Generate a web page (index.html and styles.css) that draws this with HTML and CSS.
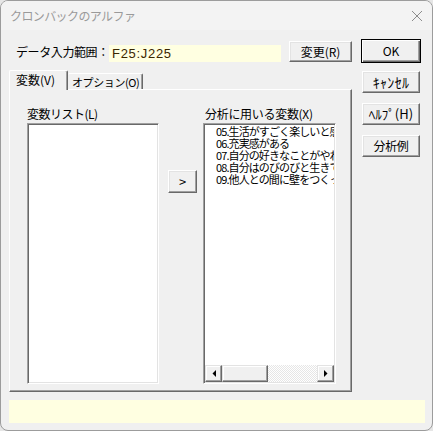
FILE: index.html
```html
<!DOCTYPE html>
<html lang="ja">
<head>
<meta charset="utf-8">
<title>クロンバックのアルファ</title>
<link rel="stylesheet" href="styles.css">
</head>
<body>
<div class="window">
  <div class="titlebar">
    <span class="title">クロンバックのアルファ</span>
    <svg class="close" width="12" height="12" viewBox="0 0 12 12"><path d="M1 1L11 11M11 1L1 11" stroke="#8c8c8c" stroke-width="1" fill="none"/></svg>
  </div>
  <div class="content">
    <div class="main">
      <div class="row1">
        <span class="data-label">データ入力範囲：</span>
        <div class="range-field">F25:J225</div>
        <button class="btn btn-change">変更(R)</button>
      </div>
      <div class="tabs">
        <div class="tab tab-active">変数(V)</div>
        <div class="tab tab-inactive">オプション(O)</div>
      </div>
      <div class="panel">
        <div class="col col-left">
          <div class="col-label">変数リスト(L)</div>
          <div class="listbox"></div>
        </div>
        <button class="btn btn-move">&gt;</button>
        <div class="col col-right">
          <div class="col-label col-label-right">分析に用いる変数(X)</div>
          <div class="listbox listbox-items">
            <ul class="items">
              <li>05.生活がすごく楽しいと感じる</li>
              <li>06.充実感がある</li>
              <li>07.自分の好きなことがやれている</li>
              <li>08.自分はのびのびと生きている</li>
              <li>09.他人との間に壁をつくっている</li>
            </ul>
            <div class="hscroll">
              <div class="sb-btn"><svg width="4" height="7" viewBox="0 0 4 7"><path d="M4 0V7L0.5 3.5Z" fill="#000"/></svg></div>
              <div class="sb-thumb"></div>
              <div class="sb-track"></div>
              <div class="sb-btn"><svg width="4" height="7" viewBox="0 0 4 7"><path d="M0 0V7L3.5 3.5Z" fill="#000"/></svg></div>
            </div>
          </div>
        </div>
      </div>
    </div>
    <div class="side">
      <button class="btn btn-default">OK</button>
      <button class="btn btn-side btn-kana btn-cancel">ｷｬﾝｾﾙ</button>
      <button class="btn btn-side btn-kana btn-help">ﾍﾙﾌﾟ(H)</button>
      <button class="btn btn-side">分析例</button>
    </div>
  </div>
  <div class="status"></div>
</div>
</body>
</html>
```

FILE: styles.css
```css
* { box-sizing: border-box; }
html, body { margin: 0; padding: 0; }
body {
  width: 433px;
  height: 431px;
  overflow: hidden;
  background: #e6e6e6;
  font-family: "Noto Sans CJK JP", "Noto Sans", sans-serif;
  color: #000;
}
.window {
  width: 433px;
  height: 431px;
  border: 1px solid #9c9c9c;
  border-radius: 8px;
  background: #f0f0f0;
  overflow: hidden;
  display: flex;
  flex-direction: column;
}
.titlebar {
  height: 29px;
  flex: none;
  display: flex;
  align-items: center;
  padding-left: 9px;
  background: #f3f3f3;
}
.title {
  font-size: 12px;
  line-height: 14px;
  color: #9a9a9a;
  letter-spacing: -0.6px;
}
.close {
  margin-left: auto;
  margin-right: 9px;
  margin-top: 1px;
}
.content {
  display: flex;
  padding: 9px 0 0 8px;
}
.main { width: 343px; flex: none; }
.side {
  width: 60px;
  margin-left: 9px;
  display: flex;
  flex-direction: column;
  align-items: center;
}
.row1 {
  height: 31px;
  display: flex;
  align-items: flex-start;
}
.data-label {
  width: 93px;
  margin-left: 7px;
  margin-top: 6px;
  font-size: 12px;
  line-height: 14px;
  letter-spacing: -0.4px;
  white-space: nowrap;
}
.range-field {
  width: 172px;
  height: 17px;
  margin-top: 6px;
  padding-left: 3px;
  background: #ffffe1;
  font-family: "Liberation Sans", sans-serif;
  font-size: 13px;
  line-height: 18px;
  letter-spacing: 0.7px;
  color: #3a2600;
}
.btn {
  font-family: "Noto Sans CJK JP", "Noto Sans", sans-serif;
  font-size: 12px;
  line-height: 14px;
  color: #000;
  padding: 0;
  margin: 0;
  background: #f0f0f0;
  border: 1px solid;
  border-color: #ffffff #696969 #696969 #ffffff;
  box-shadow: inset -1px -1px #a0a0a0, inset 1px 1px #e3e3e3;
  display: flex;
  align-items: center;
  justify-content: center;
  white-space: nowrap;
}
.btn-change {
  width: 63px;
  height: 21px;
  margin-left: 8px;
  margin-top: 2px;
}
.tabs {
  height: 19px;
  display: flex;
  align-items: flex-end;
}
.tab {
  font-size: 12px;
  line-height: 14px;
  background: #f0f0f0;
  border-top: 1px solid #ffffff;
  border-right: 1px solid #696969;
  border-radius: 2px 2px 0 0;
  box-shadow: inset -1px 0 #a0a0a0;
  white-space: nowrap;
}
.tab-active {
  position: relative;
  z-index: 1;
  width: 59px;
  height: 20px;
  margin-bottom: -1px;
  border-left: 1px solid #ffffff;
  padding: 2px 0 0 6px;
}
.tab-inactive {
  width: 75px;
  height: 16px;
  padding: 1px 0 0 4px;
  font-size: 11px;
  letter-spacing: -0.4px;
}
.panel {
  height: 303px;
  border: 1px solid;
  border-color: #ffffff #696969 #696969 #ffffff;
  box-shadow: inset -1px -1px #a0a0a0;
  display: flex;
  align-items: flex-start;
  padding: 17px 0 0 17px;
}
.col { display: flex; flex-direction: column; }
.col-left { width: 132px; }
.col-right { width: 133px; margin-left: 6px; }
.col-label {
  font-size: 12px;
  line-height: 13px;
  height: 13px;
  letter-spacing: -0.5px;
  white-space: nowrap;
}
.col-label-right { padding-left: 2px; letter-spacing: -0.3px; }
.listbox {
  margin-top: 3px;
  height: 261px;
  background: #ffffff;
  border: 1px solid;
  border-color: #a0a0a0 #ffffff #ffffff #a0a0a0;
  padding: 1px;
  box-shadow: inset 1px 1px #696969, inset -1px -1px #e3e3e3;
}
.listbox-items {
  display: flex;
  flex-direction: column;
}
.items {
  flex: 1;
  margin: 0;
  padding: 0 0 0 11px;
  list-style: none;
  overflow: hidden;
  font-size: 11px;
  line-height: 12px;
  letter-spacing: -0.9px;
}
.items li { white-space: nowrap; height: 12px; }
.btn-move {
  width: 29px;
  height: 23px;
  margin-left: 9px;
  margin-top: 63px;
  font-size: 13px;
}
.hscroll {
  height: 17px;
  flex: none;
  display: flex;
}
.sb-btn, .sb-thumb {
  height: 17px;
  background: #f0f0f0;
  border: 1px solid;
  border-color: #e3e3e3 #696969 #696969 #e3e3e3;
  box-shadow: inset -1px -1px #a0a0a0, inset 1px 1px #ffffff;
  display: flex;
  align-items: center;
  justify-content: center;
}
.sb-btn { width: 17px; }
.sb-thumb { width: 46px; }
.sb-track {
  flex: 1;
  background: repeating-conic-gradient(#e6e6e6 0 25%, #ffffff 0 50%) 0 0 / 2px 2px;
}
.btn-default {
  width: 60px;
  height: 24px;
  border: 1px solid #000000;
  box-shadow: inset 1px 1px #ffffff, inset -1px -1px #696969, inset -2px -2px #a0a0a0;
}
.btn-side {
  width: 58px;
  height: 22px;
  margin-top: 10px;
  letter-spacing: -0.3px;
}
.btn-kana {
  font-size: 14px;
  letter-spacing: 0.3px;
}
.btn-help {
  font-size: 13px;
  letter-spacing: 0;
}
.btn-cancel { margin-top: 8px; }
.status {
  margin: 8px 0 0 8px;
  width: 416px;
  height: 23px;
  background: #ffffe1;
}
```
